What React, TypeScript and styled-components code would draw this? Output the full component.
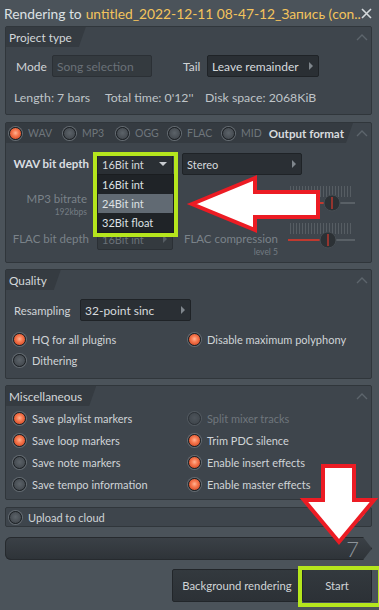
import React from 'react';
import styled, { createGlobalStyle } from 'styled-components';

const GlobalStyle = createGlobalStyle`
  html, body { margin: 0; padding: 0; }
  body {
    background: #4b535a;
    font-family: Lato, "Noto Sans", sans-serif;
    color: #cfd3d6;
  }
  * { box-sizing: border-box; }
`;

const Window = styled.div`
  position: relative;
  width: 379px;
  height: 610px;
  overflow: hidden;
  background: #4b535a;
  display: flex;
  flex-direction: column;
`;

const TitleBar = styled.div`
  height: 26px;
  flex: none;
  display: flex;
  align-items: center;
  padding: 0 8px 0 4px;
  font-size: 13.8px;
  color: #dde1e4;
  white-space: nowrap;
`;

const FileName = styled.span`
  color: #f3c35c;
  margin-left: 4px;
`;

const Close = styled.svg`
  margin-left: auto;
  flex: none;
`;

const Panel = styled.section<{ $top: number }>`
  margin: ${p => p.$top}px 7px 0 5px;
  background: #3e454c;
  border: 1px solid #30363b;
  border-radius: 2px;
  flex: none;
`;

const PanelHead = styled.div`
  height: 20px;
  display: flex;
  align-items: stretch;
`;

const Tab = styled.div<{ $wide?: boolean }>`
  display: flex;
  align-items: center;
  padding: 0 14px 0 3px;
  background: #353b41;
  clip-path: polygon(0 0, 100% 0, calc(100% - 7px) 100%, 0 100%);
  font-size: 11.8px;
  color: #d3d7da;
  white-space: nowrap;
  ${p => (p.$wide ? 'flex: 1; padding-right: 9px;' : '')}
`;

const Chevron = styled.div`
  margin-left: auto;
  width: 18px;
  display: flex;
  align-items: center;
  justify-content: center;
`;

const FormatChoices = styled.div`
  display: grid;
  grid-template-columns: 54px 53px 52px 54px auto;
  align-items: center;
  flex: none;
`;

const FormatTitle = styled.span`
  margin-left: auto;
  font-size: 11.6px;
  font-weight: 700;
  color: #d8dcdf;
`;

const Choice = styled.label<{ $dim?: boolean; $size?: number }>`
  display: flex;
  align-items: center;
  gap: 6px;
  font-size: ${p => p.$size ?? 11}px;
  color: ${p => (p.$dim ? '#6f767c' : '#d0d4d7')};
  white-space: nowrap;
`;

const Radio = styled.span<{ $on?: boolean; $dim?: boolean }>`
  width: 13px;
  height: 13px;
  flex: none;
  border-radius: 50%;
  border: 1px solid #1d2125;
  box-shadow: 0 0 0 1px #646b71;
  background: ${p =>
    p.$on
      ? 'radial-gradient(circle at 50% 45%, #ffb393 0, #f87b52 35%, #dc552f 72%, #b33b1d 100%)'
      : 'radial-gradient(circle at 50% 45%, #5c6369 0, #484e54 60%, #3a4045 100%)'};
  opacity: ${p => (p.$dim ? 0.5 : 1)};
`;

const Row = styled.div<{ $top: number; $left: number }>`
  display: flex;
  align-items: center;
  height: 22px;
  margin-top: ${p => p.$top}px;
  padding-left: ${p => p.$left}px;
`;

const Label = styled.span<{ $w: number; $gap?: number }>`
  width: ${p => p.$w}px;
  margin-left: ${p => p.$gap ?? 0}px;
  font-size: 12px;
  color: #d0d4d7;
  flex: none;
`;

const Field = styled.div<{ $w: number; $disabled?: boolean; $size?: number }>`
  position: relative;
  width: ${p => p.$w}px;
  height: 22px;
  flex: none;
  display: flex;
  align-items: center;
  justify-content: space-between;
  padding: 0 5px 0 4px;
  background: ${p => (p.$disabled ? '#343a3f' : '#2a2f34')};
  border: 1px solid ${p => (p.$disabled ? '#2b3035' : '#1f2327')};
  border-radius: 2px;
  font-size: ${p => p.$size ?? 11.5}px;
  color: ${p => (p.$disabled ? '#6a7178' : '#d6dadd')};
  white-space: nowrap;
`;

const ArrowRight = styled.span<{ $dim?: boolean }>`
  width: 0;
  height: 0;
  border-top: 4px solid transparent;
  border-bottom: 4px solid transparent;
  border-left: 4px solid ${p => (p.$dim ? '#555c62' : '#7f868c')};
`;

const ArrowDown = styled.span`
  width: 0;
  height: 0;
  border-left: 4px solid transparent;
  border-right: 4px solid transparent;
  border-top: 4px solid #c8ccd0;
`;

const InfoRow = styled.div`
  display: grid;
  grid-template-columns: 91px 100px auto;
  margin-top: 13px;
  padding: 0 0 8px 8px;
  font-size: 12.3px;
  line-height: 16px;
  color: #bfc4c8;
`;

const FormatRow = styled.div<{ $top: number; $bottom?: number }>`
  display: grid;
  grid-template-columns: 91px 85px 106px 1fr;
  align-items: start;
  margin-top: ${p => p.$top}px;
  padding-bottom: ${p => p.$bottom ?? 0}px;
`;

const FieldLabel = styled.div<{ $dim?: boolean; $strong?: boolean; $stack?: boolean }>`
  padding-right: ${p => (p.$stack ? 10 : 8)}px;
  text-align: right;
  font-size: 11.5px;
  line-height: ${p => (p.$stack ? 16 : 22)}px;
  font-weight: ${p => (p.$strong ? 700 : 400)};
  color: ${p => (p.$dim ? '#7a8289' : '#dadee1')};
  white-space: nowrap;
`;

const Sub = styled.div`
  font-size: 8.5px;
  line-height: 11px;
  font-weight: 400;
  color: #747c83;
`;

const Stack = styled.div<{ $top?: number }>`
  margin-top: ${p => p.$top ?? 0}px;
`;

const DropList = styled.ul`
  position: absolute;
  top: 100%;
  left: -1px;
  width: 77px;
  margin: 0;
  padding: 0;
  list-style: none;
  background: #1f2327;
  border: 1px solid #1a1d20;
  z-index: 2;
`;

const DropItem = styled.li<{ $active?: boolean }>`
  height: 19px;
  line-height: 19px;
  padding-left: 4px;
  font-size: 11px;
  color: #dde1e4;
  background: ${p => (p.$active ? '#616a73' : 'transparent')};
`;

const SliderSvg = styled.svg`
  margin-top: -8px;
  display: block;
`;

const ResampleLabel = styled.span`
  width: 66px;
  font-size: 11.3px;
  color: #d0d4d7;
  flex: none;
`;

const OptionGrid = styled.div<{ $top: number; $bottom: number; $row: number }>`
  display: grid;
  grid-template-columns: 175px 1fr;
  grid-auto-rows: ${p => p.$row}px;
  align-items: center;
  margin-top: ${p => p.$top}px;
  padding: 0 0 ${p => p.$bottom}px 7px;
`;

const UploadBar = styled.div`
  margin: 7px 7px 0 5px;
  height: 20px;
  flex: none;
  display: flex;
  align-items: center;
  padding: 0 6px 0 3px;
  background: #3e454c;
  border: 1px solid #30363b;
  border-radius: 2px;
`;

const Check = styled.svg`
  margin-left: auto;
`;

const Progress = styled.div`
  margin: 10px 7px 0 5px;
  height: 23px;
  flex: none;
  border-radius: 6px 0 0 6px;
  background: linear-gradient(#3b4147, #2e3338);
  box-shadow: inset 0 0 0 1px #262a2e;
  clip-path: polygon(0 0, calc(100% - 9px) 0, 100% 50%, calc(100% - 9px) 100%, 0 100%);
  text-align: right;
  padding-right: 13px;
  font-size: 22px;
  line-height: 23px;
  font-weight: 300;
  color: #8d949a;
`;

const ButtonRow = styled.div`
  display: flex;
  justify-content: flex-end;
  margin: 9px 7px 0 0;
`;

const Button = styled.button<{ $w: number }>`
  width: ${p => p.$w}px;
  height: 33px;
  background: linear-gradient(#33393e, #2c3136);
  border: 1px solid #22262a;
  border-radius: 2px;
  color: #d0d4d7;
  font-family: inherit;
  font-size: 11.3px;
  padding: 0;
`;

const Highlight = styled.div<{ $x: number; $y: number; $w: number; $h: number }>`
  position: absolute;
  left: ${p => p.$x}px;
  top: ${p => p.$y}px;
  width: ${p => p.$w}px;
  height: ${p => p.$h}px;
  border: 4px solid #b5e61d;
  pointer-events: none;
  z-index: 5;
`;

const Callout = styled.svg<{ $x: number; $y: number }>`
  position: absolute;
  left: ${p => p.$x}px;
  top: ${p => p.$y}px;
  z-index: 6;
  pointer-events: none;
`;

function UpChevron() {
  return (
    <svg width="12" height="7" viewBox="0 0 12 7">
      <polyline points="1,6 6,1 11,6" fill="none" stroke="#5d656c" strokeWidth="1.4" />
    </svg>
  );
}

function Slider({ fill }: { fill: number }) {
  const ticks = Array.from({ length: 21 }, (_, i) => 2 + i * 3);
  return (
    <SliderSvg width="68" height="34" viewBox="0 0 68 34">
      {ticks.map(x => (
        <line key={x} x1={x + 0.5} y1="3" x2={x + 0.5} y2="14" stroke="#565d63" strokeWidth="1" />
      ))}
      <line x1="0" y1="20" x2="67" y2="20" stroke="#596066" strokeWidth="2" />
      {fill > 0 && <line x1="0" y1="20" x2={fill - 8} y2="20" stroke="#c0392f" strokeWidth="2" />}
      <circle cx={fill} cy="20" r="8" fill="#2c3135" stroke="#454c52" strokeWidth="1" />
      <line x1={fill} y1="14" x2={fill} y2="26" stroke="#b8372e" strokeWidth="1.5" />
    </SliderSvg>
  );
}

const misc: [string, boolean, string, boolean, boolean?][] = [
  ['Save playlist markers', true, 'Split mixer tracks', false, true],
  ['Save loop markers', true, 'Trim PDC silence', true],
  ['Save note markers', false, 'Enable insert effects', true],
  ['Save tempo information', false, 'Enable master effects', true],
];

const formats = ['WAV', 'MP3', 'OGG', 'FLAC', 'MID'];

export default function App() {
  return (
    <Window>
      <GlobalStyle />
      <TitleBar>
        Rendering to<FileName>untitled_2022-12-11 08-47-12_Запись (con..</FileName>
        <Close width="11" height="11" viewBox="0 0 11 11">
          <path d="M1 1L10 10M10 1L1 10" stroke="#d5d9dc" strokeWidth="1.6" />
        </Close>
      </TitleBar>

      <Panel $top={0}>
        <PanelHead>
          <Tab>Project type</Tab>
          <Chevron><UpChevron /></Chevron>
        </PanelHead>
        <Row $top={8} $left={10}>
          <Label $w={36}>Mode</Label>
          <Field $w={100} $size={12} $disabled>Song selection</Field>
          <Label $w={24} $gap={31}>Tail</Label>
          <Field $w={112} $size={12}>Leave remainder<ArrowRight /></Field>
        </Row>
        <InfoRow>
          <span>Length: 7 bars</span>
          <span>Total time: 0'12''</span>
          <span>Disk space: 2068KiB</span>
        </InfoRow>
      </Panel>

      <Panel $top={7}>
        <PanelHead>
          <Tab $wide>
            <FormatChoices>
              {formats.map((f, i) => (
                <Choice key={f} $dim $size={10.5}><Radio $on={i === 0} />{f}</Choice>
              ))}
            </FormatChoices>
            <FormatTitle>Output format</FormatTitle>
          </Tab>
          <Chevron><UpChevron /></Chevron>
        </PanelHead>
        <FormatRow $top={10}>
          <FieldLabel $strong>WAV bit depth</FieldLabel>
          <Field $w={76} $size={11}>
            16Bit int<ArrowDown />
            <DropList>
              <DropItem>16Bit int</DropItem>
              <DropItem $active>24Bit int</DropItem>
              <DropItem>32Bit float</DropItem>
            </DropList>
          </Field>
          <Field $w={120} $size={11}>Stereo<ArrowRight /></Field>
        </FormatRow>
        <FormatRow $top={16}>
          <FieldLabel $dim $stack>
            MP3 bitrate
            <Sub>192kbps</Sub>
          </FieldLabel>
          <div />
          <div />
          <Slider fill={44} />
        </FormatRow>
        <FormatRow $top={10} $bottom={4}>
          <FieldLabel $dim>FLAC bit depth</FieldLabel>
          <Field $w={76} $size={11} $disabled>16Bit int<ArrowRight $dim /></Field>
          <Stack $top={3}>
            <FieldLabel $dim $stack>
              FLAC compression
              <Sub>level 5</Sub>
            </FieldLabel>
          </Stack>
          <Slider fill={40} />
        </FormatRow>
      </Panel>

      <Panel $top={6}>
        <PanelHead>
          <Tab>Quality</Tab>
          <Chevron><UpChevron /></Chevron>
        </PanelHead>
        <Row $top={9} $left={8}>
          <ResampleLabel>Resampling</ResampleLabel>
          <Field $w={111} $size={12}>32-point sinc<ArrowRight /></Field>
        </Row>
        <OptionGrid $top={8} $bottom={7} $row={21}>
          <Choice><Radio $on />HQ for all plugins</Choice>
          <Choice><Radio $on />Disable maximum polyphony</Choice>
          <Choice><Radio />Dithering</Choice>
        </OptionGrid>
      </Panel>

      <Panel $top={6}>
        <PanelHead>
          <Tab>Miscellaneous</Tab>
          <Chevron><UpChevron /></Chevron>
        </PanelHead>
        <OptionGrid $top={1} $bottom={4} $row={22}>
          {misc.map(([l, lOn, r, rOn, rDim]) => (
            <React.Fragment key={l}>
              <Choice><Radio $on={lOn} />{l}</Choice>
              <Choice $dim={rDim}><Radio $on={rOn} $dim={rDim} />{r}</Choice>
            </React.Fragment>
          ))}
        </OptionGrid>
      </Panel>

      <UploadBar>
        <Choice><Radio />Upload to cloud</Choice>
        <Check width="10" height="8" viewBox="0 0 10 8">
          <polyline points="1,4 4,7 9,1" fill="none" stroke="#a3aab0" strokeWidth="1.5" />
        </Check>
      </UploadBar>

      <Progress>7</Progress>

      <ButtonRow>
        <Button $w={130}>Background rendering</Button>
        <Button $w={70}>Start</Button>
      </ButtonRow>

      <Highlight $x={93} $y={152} $w={85} $h={85} />
      <Highlight $x={298} $y={566} $w={84} $h={41} />

      <Callout $x={186} $y={172} width="140" height="64" viewBox="0 0 140 64">
        <polygon
          points="6,32 69,6 69,20 132,20 132,45 69,45 69,58"
          fill="#fff"
          stroke="#ec1c24"
          strokeWidth="4"
        />
      </Callout>
      <Callout $x={298} $y={460} width="82" height="88" viewBox="0 0 82 88">
        <polygon
          points="25,6 56,6 56,40 76,40 41,82 6,40 25,40"
          fill="#fff"
          stroke="#ec1c24"
          strokeWidth="4"
        />
      </Callout>
    </Window>
  );
}
